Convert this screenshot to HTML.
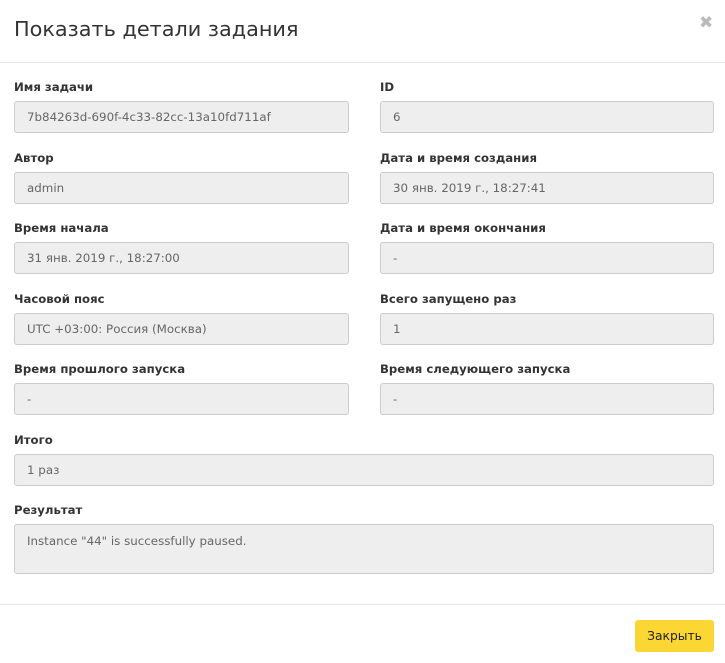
<!DOCTYPE html>
<html><head><meta charset="utf-8"><style>
body{margin:0;width:725px;height:663px;background:#fff;font-family:"DejaVu Sans","Liberation Sans",sans-serif;position:relative;overflow:hidden}
.t{position:absolute;left:14px;top:17px;font-size:20.8px;color:#333;}
.x{position:absolute;left:699px;top:13px;font-size:17px;color:#bbb;font-weight:bold}
.hr{position:absolute;left:0;width:725px;height:1px;background:#e5e5e5}
.l{position:absolute;font-size:11.7px;font-weight:bold;color:#333}
.i{position:absolute;box-sizing:border-box;height:32px;background:#eee;border:1px solid #ccc;border-radius:3px;font-size:11.85px;color:#666;padding:8px 12px 0 12px;white-space:nowrap}
.b{position:absolute;left:635px;top:620px;width:79px;height:32px;background:#fcd734;border-radius:3px;font-size:12.3px;color:#222;text-align:center;line-height:32px}
</style></head><body>
<div class="t">Показать детали задания</div>
<div class="x">✖</div>
<div class="hr" style="top:62px"></div>

<div class="l" style="left:14px;top:80px">Имя задачи</div>
<div class="l" style="left:380px;top:80px">ID</div>
<div class="i" style="left:14px;top:101px;width:335px">7b84263d-690f-4c33-82cc-13a10fd711af</div>
<div class="i" style="left:380px;top:101px;width:334px">6</div>

<div class="l" style="left:14px;top:151px">Автор</div>
<div class="l" style="left:380px;top:151px">Дата и время создания</div>
<div class="i" style="left:14px;top:172px;width:335px">admin</div>
<div class="i" style="left:380px;top:172px;width:334px">30 янв. 2019 г., 18:27:41</div>

<div class="l" style="left:14px;top:221px">Время начала</div>
<div class="l" style="left:380px;top:221px">Дата и время окончания</div>
<div class="i" style="left:14px;top:242px;width:335px">31 янв. 2019 г., 18:27:00</div>
<div class="i" style="left:380px;top:242px;width:334px">-</div>

<div class="l" style="left:14px;top:292px">Часовой пояс</div>
<div class="l" style="left:380px;top:292px">Всего запущено раз</div>
<div class="i" style="left:14px;top:313px;width:335px">UTC +03:00: Россия (Москва)</div>
<div class="i" style="left:380px;top:313px;width:334px">1</div>

<div class="l" style="left:14px;top:362px">Время прошлого запуска</div>
<div class="l" style="left:380px;top:362px">Время следующего запуска</div>
<div class="i" style="left:14px;top:383px;width:335px">-</div>
<div class="i" style="left:380px;top:383px;width:334px">-</div>

<div class="l" style="left:14px;top:433px">Итого</div>
<div class="i" style="left:14px;top:454px;width:700px">1 раз</div>

<div class="l" style="left:14px;top:503px">Результат</div>
<div class="i" style="left:14px;top:524px;width:700px;height:50px;padding-top:9px">Instance "44" is successfully paused.</div>

<div class="hr" style="top:604px"></div>
<div class="b">Закрыть</div>
</body></html>
